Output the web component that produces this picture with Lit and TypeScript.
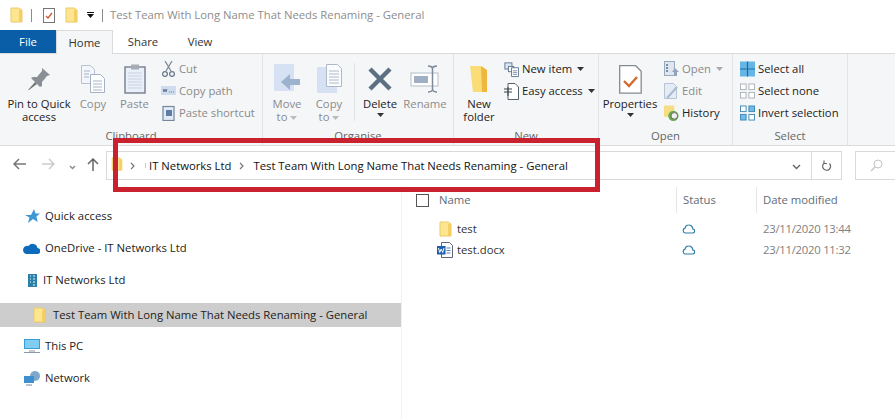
import { LitElement, html, css } from "lit";
import { customElement } from "lit/decorators.js";

const folder = (w = 13, h = 16) => html`<svg width=${w} height=${h} viewBox="0 0 13 16"><path d="M1 1h8l3 2v12H1z" fill="#fde68f" stroke="#ecc964" stroke-width="1"/><path d="M9 3h3v12H9z" fill="#f5cf63"/></svg>`;
const caret = (c = "#333") => html`<svg class="caret" width="7" height="4" viewBox="0 0 7 4"><path d="M0 0h7L3.500 4z" fill=${c}/></svg>`;
const cloud = html`<svg width="13" height="10" viewBox="0 0 13 10"><path d="M3 9h7.500a2 2 0 0 0 .3-4A4 4 0 0 0 6.500 1 3.600 3.600 0 0 0 3 4.200 2.500 2.500 0 0 0 3 9z" fill="#fff" stroke="#2f7fa8" stroke-width="1.200"/></svg>`;
const chevron = html`<svg width="5" height="8" viewBox="0 0 5 8"><path d="M1 1l3 3-3 3" fill="none" stroke="#777" stroke-width="1.200"/></svg>`;

const icons = {
  pin: html`<svg width="24" height="24" viewBox="0 0 24 24"><path d="M15 1l8 7-3 1-5 6 0 4-2 1-9-9 2-1h4l5-6z" fill="#8a8f96"/><path d="M8 15l-7 8 1 0 8-6z" fill="#777"/></svg>`,
  copy: html`<svg width="26" height="30" viewBox="0 0 26 30"><path d="M1.500 1.500h9l4 4v14h-13z" fill="#f3f6fb" stroke="#b6c2d2"/><path d="M10.500 10.500h10l4 4v14h-14z" fill="#fff" stroke="#a4b2c4"/><path d="M13 17h9M13 20h9M13 23h9M13 26h9M4 7h6M4 10h5M4 13h5" stroke="#a9b4c4"/></svg>`,
  paste: html`<svg width="22" height="30" viewBox="0 0 22 30"><rect x="1" y="3" width="20" height="26" fill="#eaf0f9" stroke="#7d8591" stroke-width="1.500"/><rect x="7" y=".5" width="8" height="5" fill="#a7adb6"/><path d="M4 9h14M4 12h14M4 15h14M4 18h14M4 21h14M4 24h14" stroke="#c9d3e2"/></svg>`,
  cut: html`<svg width="13" height="16" viewBox="0 0 13 16"><path d="M3 0l6 10M10 0L4 10" stroke="#7f8a99" stroke-width="1.300"/><circle cx="3" cy="13" r="2.400" fill="none" stroke="#6a7a8c" stroke-width="1.300"/><circle cx="10" cy="13" r="2.400" fill="none" stroke="#6a7a8c" stroke-width="1.300"/></svg>`,
  cpath: html`<svg width="15" height="10" viewBox="0 0 15 10"><rect width="15" height="9" fill="#cfdcf0"/><path d="M2 3l1 3 1-3 1 3 1-3M8 6h1M10 6h1M12 6h1" stroke="#6a7d99" fill="none"/></svg>`,
  pshort: html`<svg width="13" height="16" viewBox="0 0 13 16"><rect x="1" y="1.500" width="11" height="14" fill="#e2ebf7" stroke="#76879c" stroke-width="1.200"/><rect x="4" y="5" width="6" height="6" fill="#5d7da6"/></svg>`,
  move: html`<svg width="28" height="30" viewBox="0 0 28 30"><rect x="1" y="0" width="20" height="27" fill="#d6e2f3"/><path d="M27 15h-10v-5l-9 8 9 8v-5h10z" fill="#9db3cd"/></svg>`,
  copyto: html`<svg width="27" height="30" viewBox="0 0 27 30"><rect x="1" y="3" width="20" height="26" fill="#d6e2f3"/><path d="M10.500 .5h11l4 4v18h-15z" fill="#fbfcfe" stroke="#aeb8c6"/><path d="M13 7h10M13 10h10M13 13h10M13 16h10M13 19h10" stroke="#b0bac8"/></svg>`,
  del: html`<svg width="26" height="26" viewBox="0 0 26 26"><path d="M3 3l20 20M23 3L3 23" stroke="#5d7083" stroke-width="4.500"/></svg>`,
  rename: html`<svg width="30" height="28" viewBox="0 0 30 28"><rect x="1" y="8" width="27" height="13" fill="#fff" stroke="#b3bdc9"/><rect x="4" y="11" width="14" height="7" fill="#9fb0c4"/><path d="M18 1c3 0 4 1 4.500 2 .5-1 1.500-2 4.500-2M22.500 3v22M18 27c3 0 4-1 4.500-2 .5 1 1.500 2 4.500 2" stroke="#7d8a99" stroke-width="1.500" fill="none"/></svg>`,
  newfolder: html`<svg width="20" height="28" viewBox="0 0 20 28"><path d="M1 1h11l6 4v22H4z" fill="#fbdd78"/><path d="M12 1l6 4v22h-5z" fill="#eeb83e"/></svg>`,
  newitem: html`<svg width="17" height="17" viewBox="0 0 17 17"><rect x="1" y="1" width="8" height="7" fill="#dbe7f5" stroke="#58708c"/><rect x="5" y="5" width="6" height="6" fill="#fff" stroke="#58708c"/><path d="M8.500 6.500h8v10h-8z" fill="#fff" stroke="#58708c"/><path d="M10 10h5M10 12h5M10 14h5" stroke="#7a8ea5"/></svg>`,
  easy: html`<svg width="15" height="17" viewBox="0 0 15 17"><path d="M4 .5h7l3.500 3.500v12.500H4z" fill="#fff" stroke="#56606c"/><path d="M0 6h8M0 9h8M4 4v9" stroke="#39424d"/></svg>`,
  props: html`<svg width="23" height="29" viewBox="0 0 23 29"><path d="M.7 .7h16l5.500 5.500v22H.7z" fill="#fff" stroke="#858a90" stroke-width="1.300"/><path d="M5 16l5 5 8-9" fill="none" stroke="#d26b2e" stroke-width="2.400"/></svg>`,
  open: html`<svg width="15" height="16" viewBox="0 0 15 16"><rect x=".5" y=".5" width="10" height="14" fill="#dee6f1" stroke="#9aaabd"/><path d="M2 4h2M2 7h2M2 10h2" stroke="#7e8fa3" stroke-width="2"/><path d="M11 7l-3 4h2v4h3v-4h2z" fill="#93a5ba"/></svg>`,
  edit: html`<svg width="15" height="16" viewBox="0 0 15 16"><path d="M.5 .5h9l3 3v12H.5z" fill="#e4ecf6" stroke="#b6c4d5"/><path d="M3 15L13 4" stroke="#a8bbd0" stroke-width="2"/></svg>`,
  history: html`<svg width="16" height="17" viewBox="0 0 16 17"><rect x="0" y="0" width="11" height="12" fill="#f5dd83"/><circle cx="10" cy="11" r="5.500" fill="#6aa84f"/><circle cx="11" cy="11" r="3.500" fill="#eef2f0" stroke="#666"/></svg>`,
  all: html`<svg width="16" height="16" viewBox="0 0 16 16"><rect width="16" height="16" fill="#66b5e4"/><path d="M8 0v16M0 8h16" stroke="#1a6ea8" stroke-width="1.300"/></svg>`,
  none: html`<svg width="16" height="16" viewBox="0 0 16 16" fill="#fff" stroke="#a9b0b8"><rect x=".5" y=".5" width="6" height="6"/><rect x="9.500" y=".5" width="6" height="6"/><rect x=".5" y="9.500" width="6" height="6"/><rect x="9.500" y="9.500" width="6" height="6"/></svg>`,
  invert: html`<svg width="16" height="16" viewBox="0 0 16 16" stroke="#3f87b8"><rect x=".5" y=".5" width="6" height="6" fill="#fff"/><rect x="9.500" y=".5" width="6" height="6" fill="#70bbe8"/><rect x=".5" y="9.500" width="6" height="6" fill="#70bbe8"/><rect x="9.500" y="9.500" width="6" height="6" fill="#fff"/></svg>`,
};

const side = {
  star: html`<svg width="15" height="14" viewBox="0 0 15 14"><path d="M9 0l1.500 4.500H15l-3.600 3 1.300 5.500L8 10l-5 4 1.500-5.500L0 6h6z" fill="#3c97d3"/></svg>`,
  drive: html`<svg width="17" height="11" viewBox="0 0 17 11"><path d="M3 11h11a3 3 0 0 0 .5-6A5 5 0 0 0 5.500 3 4 4 0 0 0 3 11z" fill="#0f6cbd"/></svg>`,
  org: html`<svg width="9" height="13" viewBox="0 0 9 13"><rect width="9" height="13" fill="#2d7ea8"/><path d="M2 2h1M5 2h2M2 5h1M5 5h2M2 8h1M5 8h2M5 11h2" stroke="#dff" stroke-width="1.200"/></svg>`,
  pc: html`<svg width="16" height="14" viewBox="0 0 16 14"><rect width="16" height="10" fill="#3a9ddb"/><rect x="1" y="1" width="14" height="8" fill="#7fcdf2"/><path d="M5 12h6M0 13.500h16" stroke="#8c99a6"/></svg>`,
  net: html`<svg width="16" height="15" viewBox="0 0 16 15"><circle cx="11" cy="5" r="5" fill="#7ea9cc"/><rect x="0" y="5" width="10" height="7" fill="#3e8fce"/><path d="M2 14h6" stroke="#7d8b99"/></svg>`,
  word: html`<svg width="16" height="16" viewBox="0 0 16 16"><path d="M4.500 .5h8l3 3v12h-11z" fill="#fff" stroke="#5a6470"/><path d="M9.500 6h4M9.500 8.500h4M9.500 11h4" stroke="#5a7fb0"/><rect x="0" y="4" width="8.500" height="8.500" fill="#1f5fae"/><path d="M1.500 6l1.200 4.500L4.200 7l1.500 3.500L7 6" fill="none" stroke="#fff"/></svg>`,
};

@customElement("app-root")
export class AppRoot extends LitElement {
  static styles = css`
    :host { display: block; width: 895px; height: 419px; overflow: hidden; position: relative; background: #fff; color: #222; font: 11.3px/14px "Open Sans", "Noto Sans", sans-serif; }
    .title { height: 30px; display: flex; align-items: center; padding-left: 10px; }
    .title .t { color: #8d8d8d; margin-left: 7px; }
    .bar { width: 1px; height: 13px; background: #8c8c8c; }
    .b1 { margin: 0 11px 0 8px; }
    .b2 { margin: 0 0 0 8px; }
    .gap { width: 10px; }
    .dd { display: flex; flex-direction: column; align-items: center; gap: 1px; margin-left: 8px; width: 8px; }
    .dd i { width: 7px; height: 1px; background: #111; }
    .tabs { height: 24px; display: flex; border-bottom: 1px solid #dadbdc; box-sizing: border-box; }
    .tab { display: flex; align-items: center; justify-content: center; height: 23px; color: #333; }
    .file { width: 56px; background: #0a5ea8; color: #fff; }
    .home { width: 57px; height: 24px; box-sizing: border-box; background: #f5f6f7; border: 1px solid #dadbdc; border-bottom: none; }
    .share { width: 60px; }
    .view { width: 54px; }
    .ribbon { height: 91px; background: #f5f6f7; display: flex; border-bottom: 1px solid #dadbdc; }
    .group { display: flex; flex-direction: column; border-right: 1px solid #e2e3e5; }
    .g1 { width: 262px; } .g2 { width: 190px; } .g3 { width: 144px; } .g4 { width: 133px; } .g5 { width: 114px; }
    .gbody { height: 75px; display: flex; }
    .glabel { text-align: center; line-height: 14px; color: #666; }
    .big { display: flex; flex-direction: column; align-items: center; padding-top: 7px; text-align: center; line-height: 13px; color: #222; }
    .big.off { color: #8b8b8b; }
    .big .ic { height: 36px; display: flex; align-items: center; justify-content: center; }
    .big > .caret { margin-top: 3px; }
    .big .line .caret { vertical-align: middle; }
    .w78 { width: 78px; } .w30 { width: 30px; } .w54 { width: 53px; } .w48 { width: 48px; } .w36 { width: 36px; } .w50 { width: 50px; } .w40 { width: 40px; } .w62 { width: 62px; } .w49 { width: 50px; }
    .sep { border-left: 1px solid #e2e3e5; margin-top: 9px; height: 58px; margin-left: 7px; }
    .small { padding-top: 4px; display: flex; flex-direction: column; }
    .small.open { padding-left: 3px; } .small.sel { padding-left: 7px; }
    .row { height: 22px; display: flex; align-items: center; gap: 3px; white-space: nowrap; }
    .row .si { width: 15px; display: flex; justify-content: center; }
    .row .caret { margin-left: 2px; }
    .row.off { color: #8b8b8b; }
    .tool { height: 40px; display: flex; }
    .nav { width: 106px; height: 29px; margin-top: 5px; display: flex; align-items: center; padding-left: 13px; box-sizing: border-box; }
    .nav .a1 { width: 29px; } .nav .a2 { width: 27px; } .nav .a3 { width: 18px; }
    .addr { width: 706px; height: 29px; margin-top: 5px; box-sizing: border-box; border: 1px solid #d9d9d9; display: flex; align-items: center; padding: 0 0 0 4px; color: #111; }
    .addr .crumb { width: 12px; }
    .addr .sp { flex: 1; }
    .chev { width: 5px; display: flex; justify-content: center; margin: 0 9px 0 8px; }
    .c0 { margin: 0 10px 0 7px; }
    .tick { width: 1px; height: 5px; background: #ccc; margin-right: 3px; }
    .ddn { margin-right: 10px; }
    .refresh { width: 30px; height: 29px; margin-top: 5px; box-sizing: border-box; border: 1px solid #d9d9d9; border-left: none; display: flex; align-items: center; justify-content: center; }
    .search { width: 40px; height: 29px; margin: 5px 0 0 13px; box-sizing: border-box; border: 1px solid #d9d9d9; border-right: none; padding-left: 14px; display: flex; align-items: center; }
    .main { display: flex; height: 233px; }
    .nav-pane { width: 401px; padding-top: 14px; box-sizing: border-box; }
    .ni { height: 32px; display: flex; align-items: center; color: #222; }
    .ni .nic { width: 45px; box-sizing: border-box; display: flex; justify-content: flex-end; padding-right: 5px; }
    .ni.org .nic { width: 43px; padding-right: 6px; }
    .ni.cur { height: 24px; margin: 7px 0 3px; background: #cdcdcd; box-sizing: border-box; }
    .ni.cur .nic { width: 53px; padding: 0 7px 0 0; }
    .list { flex: 1; border-left: 1px solid #f1f1f1; padding-left: 14px; }
    .head { height: 26px; margin-top: 1px; display: grid; grid-template-columns: 23px 237px 80px 1fr; align-items: center; color: #5d6b78; }
    .cb { width: 11px; height: 11px; border: 1px solid #555; }
    .hc { height: 26px; box-sizing: border-box; display: flex; align-items: center; padding: 0 0 0 6px; border-left: 1px solid #e5e5e5; }
    .hc.name { border-left: none; padding-left: 0; }
    .frow { display: grid; grid-template-columns: 23px 237px 80px 1fr; height: 21px; align-items: center; }
    .frow .n { display: flex; align-items: center; grid-column: 2; color: #333; }
    .frow .n .lbl { margin-left: 5px; }
    .frow .n .w { width: 16px; margin: 0 -1px 0 -2px; display: flex; }
    .frow .s { padding-left: 6px; display: flex; }
    .frow .d { padding-left: 7px; color: #808080; letter-spacing: -0.25px; }
    .rows { padding-top: 5px; }
    .mark { position: absolute; left: 113px; top: 138px; width: 487px; height: 54px; box-sizing: border-box; border: 5px solid #c9212e; pointer-events: none; }
  `;

  big(cls: string, ic: unknown, lines: unknown, off = false) {
    return html`<div class="big ${cls} ${off ? "off" : ""}"><div class="ic">${ic}</div>${lines}</div>`;
  }
  row(ic: unknown, t: string, off = false, car = false) {
    return html`<div class="row ${off ? "off" : ""}"><div class="si">${ic}</div>${t}${car ? caret(off ? "#aaa" : "#333") : ""}</div>`;
  }

  render() {
    return html`
      <div class="title">
        ${folder(13, 16)}<div class="bar b1"></div>
        <svg width="12" height="16" viewBox="0 0 12 16"><rect x=".5" y="1.500" width="11" height="14" fill="#fff" stroke="#777"/><path d="M3 9l2 2 4-5" stroke="#c9562c" stroke-width="1.300" fill="none"/></svg>
        <div class="gap"></div>${folder(13, 16)}
        <div class="dd"><i></i>${caret("#111")}</div><div class="bar b2"></div>
        <span class="t">Test Team With Long Name That Needs Renaming - General</span>
      </div>
      <div class="tabs">
        <div class="tab file">File</div><div class="tab home">Home</div>
        <div class="tab share">Share</div><div class="tab view">View</div>
      </div>
      <div class="ribbon">
        <div class="group g1">
          <div class="gbody">
            ${this.big("w78", icons.pin, html`<div>Pin to Quick<br />access</div>`)}
            ${this.big("w30", icons.copy, "Copy", true)}
            ${this.big("w54", icons.paste, "Paste", true)}
            <div class="small">${this.row(icons.cut, "Cut", true)}${this.row(icons.cpath, "Copy path", true)}${this.row(icons.pshort, "Paste shortcut", true)}</div>
          </div>
          <div class="glabel">Clipboard</div>
        </div>
        <div class="group g2">
          <div class="gbody">
            ${this.big("w48", icons.move, html`<div class="line">Move<br />to ${caret("#bbb")}</div>`, true)}
            ${this.big("w36", icons.copyto, html`<div class="line">Copy<br />to ${caret("#bbb")}</div>`, true)}
            <div class="sep"></div>
            ${this.big("w50", icons.del, html`<div>Delete</div>${caret()}`)}
            ${this.big("w40", icons.rename, "Rename", true)}
          </div>
          <div class="glabel">Organise</div>
        </div>
        <div class="group g3">
          <div class="gbody">
            ${this.big("w49", icons.newfolder, html`<div>New<br />folder</div>`)}
            <div class="small">${this.row(icons.newitem, "New item", false, true)}${this.row(icons.easy, "Easy access", false, true)}</div>
          </div>
          <div class="glabel">New</div>
        </div>
        <div class="group g4">
          <div class="gbody">
            ${this.big("w62", icons.props, html`<div>Properties</div>${caret()}`)}
            <div class="small open">${this.row(icons.open, "Open", true, true)}${this.row(icons.edit, "Edit", true)}${this.row(icons.history, "History")}</div>
          </div>
          <div class="glabel">Open</div>
        </div>
        <div class="group g5">
          <div class="gbody">
            <div class="small sel">${this.row(icons.all, "Select all")}${this.row(icons.none, "Select none")}${this.row(icons.invert, "Invert selection")}</div>
          </div>
          <div class="glabel">Select</div>
        </div>
      </div>
      <div class="tool">
        <div class="nav">
          <div class="a1"><svg width="13" height="12" viewBox="0 0 13 12"><path d="M6 1L1 6l5 5M1 6h12" fill="none" stroke="#777" stroke-width="1.500"/></svg></div>
          <div class="a2"><svg width="13" height="12" viewBox="0 0 13 12"><path d="M7 1l5 5-5 5M12 6H0" fill="none" stroke="#ccc" stroke-width="1.500"/></svg></div>
          <div class="a3"><svg width="7" height="5" viewBox="0 0 7 5"><path d="M1 1l2.500 2.500L6 1" fill="none" stroke="#888" stroke-width="1.300"/></svg></div>
          <div><svg width="12" height="13" viewBox="0 0 12 13"><path d="M1 6l5-5 5 5M6 1v12" fill="none" stroke="#666" stroke-width="1.500"/></svg></div>
        </div>
        <div class="addr">
          <div class="crumb">${folder(12, 14)}</div>
          <div class="chev c0">${chevron}</div>
          <div class="tick"></div>
          <span>IT Networks Ltd</span>
          <div class="chev">${chevron}</div>
          <span>Test Team With Long Name That Needs Renaming - General</span>
          <div class="sp"></div>
          <div class="ddn"><svg width="9" height="6" viewBox="0 0 9 6"><path d="M1 1l3.500 3.500L8 1" fill="none" stroke="#666" stroke-width="1.400"/></svg></div>
        </div>
        <div class="refresh"><svg width="11" height="12" viewBox="0 0 11 12"><path d="M8.500 3.500A4 4 0 1 1 3 3.200M3 .5v3h3" fill="none" stroke="#666" stroke-width="1.200"/></svg></div>
        <div class="search"><svg width="13" height="13" viewBox="0 0 13 13"><circle cx="8" cy="5" r="4" fill="none" stroke="#c4c4c4"/><path d="M5 8l-4 4" stroke="#c4c4c4" stroke-width="1.200"/></svg></div>
      </div>
      <div class="main">
        <div class="nav-pane">
          <div class="ni"><div class="nic">${side.star}</div>Quick access</div>
          <div class="ni"><div class="nic">${side.drive}</div>OneDrive - IT Networks Ltd</div>
          <div class="ni org"><div class="nic">${side.org}</div>IT Networks Ltd</div>
          <div class="ni cur"><div class="nic">${folder(13, 16)}</div>Test Team With Long Name That Needs Renaming - General</div>
          <div class="ni"><div class="nic">${side.pc}</div>This PC</div>
          <div class="ni"><div class="nic">${side.net}</div>Network</div>
        </div>
        <div class="list">
          <div class="head"><div class="cb"></div><div class="hc name">Name</div><div class="hc">Status</div><div class="hc">Date modified</div></div>
          <div class="rows">
            <div class="frow"><div class="n">${folder(13, 16)}<span class="lbl">test</span></div><div class="s">${cloud}</div><div class="d">23/11/2020 13:44</div></div>
            <div class="frow"><div class="n"><span class="w">${side.word}</span><span class="lbl">test.docx</span></div><div class="s">${cloud}</div><div class="d">23/11/2020 11:32</div></div>
          </div>
        </div>
      </div>
      <div class="mark"></div>
    `;
  }
}
